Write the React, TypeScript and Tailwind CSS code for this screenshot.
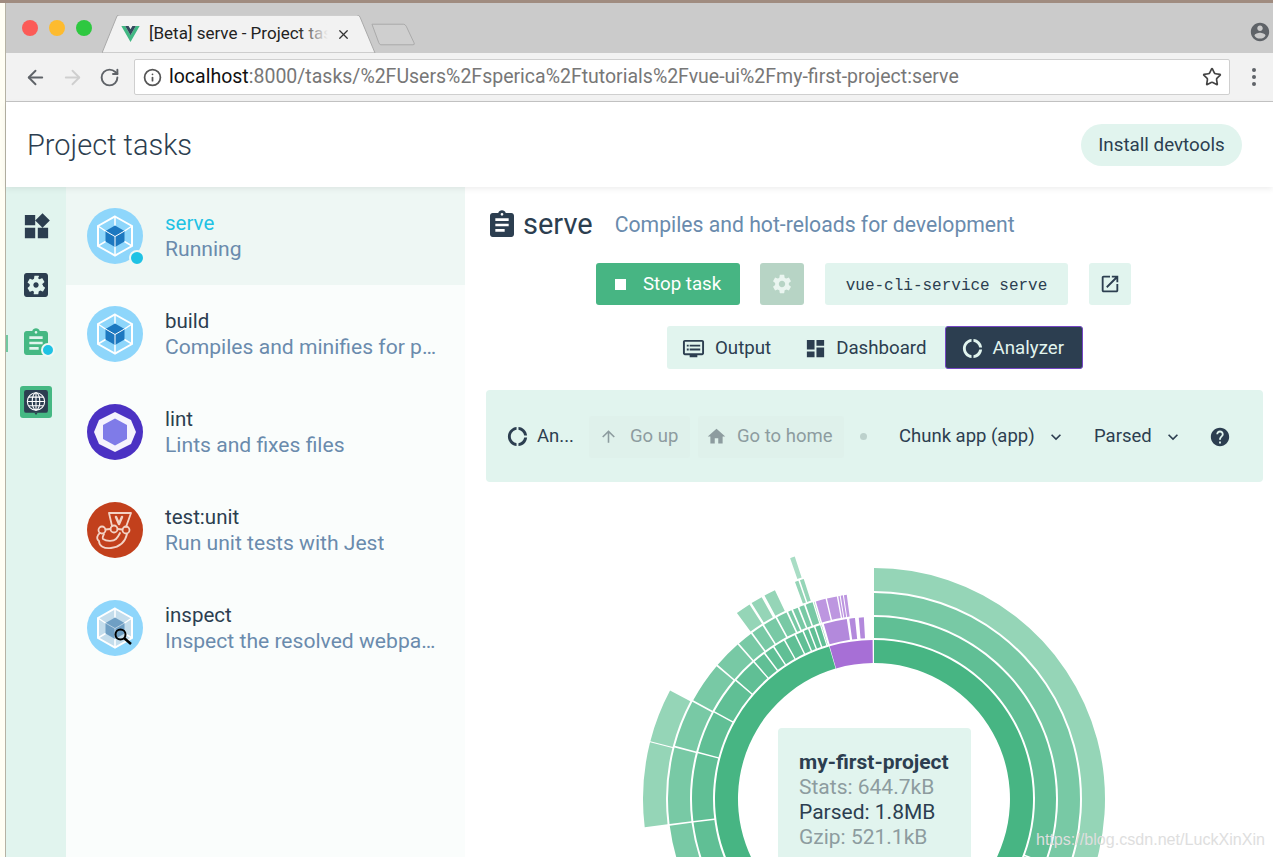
import { ArrowLeft, ArrowRight, Info, RotateCw, Star, X } from "lucide-react";
import type { ReactNode } from "react";

const paths = {
  widgets: "M13 13v8h8v-8h-8zM3 21h8v-8H3v8zM3 3v8h8V3H3zm13.66-1.31L11 7.34 16.66 13l5.66-5.66-5.66-5.65z",
  settingsBox:
    "M12 10c-1.1 0-2 .9-2 2s.9 2 2 2 2-.9 2-2-.9-2-2-2zm7-7H5c-1.11 0-2 .9-2 2v14c0 1.1.89 2 2 2h14c1.11 0 2-.9 2-2V5c0-1.1-.89-2-2-2zm-1.75 9c0 .23-.02.46-.05.68l1.48 1.16c.13.11.17.3.08.45l-1.4 2.42c-.09.15-.27.21-.43.15l-1.74-.7c-.36.28-.76.51-1.18.69l-.26 1.85c-.03.17-.18.3-.35.3h-2.8c-.17 0-.32-.13-.35-.3L10.5 17c-.42-.18-.82-.41-1.18-.69l-1.74.7c-.16.06-.34 0-.43-.15l-1.4-2.42c-.09-.15-.05-.34.08-.45l1.48-1.16c-.03-.22-.05-.45-.05-.68 0-.23.02-.46.05-.68l-1.48-1.16c-.13-.11-.17-.3-.08-.45l1.4-2.42c.09-.15.27-.21.43-.15l1.74.7c.36-.28.76-.51 1.18-.69l.26-1.85c.03-.17.18-.3.35-.3h2.8c.17 0 .32.13.35.3L13.5 7c.42.18.82.41 1.18.69l1.74-.7c.16-.06.34 0 .43.15l1.4 2.42c.09.15.05.34-.08.45l-1.48 1.16c.03.22.05.45.05.68z",
  assignment:
    "M19 3h-4.18C14.4 1.84 13.3 1 12 1c-1.3 0-2.4.84-2.82 2H5c-1.1 0-2 .9-2 2v14c0 1.1.9 2 2 2h14c1.1 0 2-.9 2-2V5c0-1.1-.9-2-2-2zm-7 0c.55 0 1 .45 1 1s-.45 1-1 1-1-.45-1-1 .45-1 1-1zm2 14H7v-2h7v2zm3-4H7v-2h10v2zm0-4H7V7h10v2z",
  gear: "M19.43 12.98c.04-.32.07-.64.07-.98s-.03-.66-.07-.98l2.11-1.65c.19-.15.24-.42.12-.64l-2-3.46c-.12-.22-.39-.3-.61-.22l-2.49 1c-.52-.4-1.08-.73-1.69-.98l-.38-2.65C14.46 2.18 14.25 2 14 2h-4c-.25 0-.46.18-.49.42l-.38 2.65c-.61.25-1.17.59-1.69.98l-2.49-1c-.23-.09-.49 0-.61.22l-2 3.46c-.13.22-.07.49.12.64l2.11 1.65c-.04.32-.07.65-.07.98s.03.66.07.98l-2.11 1.65c-.19.15-.24.42-.12.64l2 3.46c.12.22.39.3.61.22l2.49-1c.52.4 1.08.73 1.69.98l.38 2.65c.03.24.24.42.49.42h4c.25 0 .46-.18.49-.42l.38-2.65c.61-.25 1.17-.59 1.69-.98l2.49 1c.23.09.49 0 .61-.22l2-3.46c.12-.22.07-.49-.12-.64l-2.11-1.65zM12 15.5c-1.93 0-3.5-1.57-3.5-3.5s1.57-3.5 3.5-3.5 3.5 1.57 3.5 3.5-1.57 3.5-3.5 3.5z",
  dashboard: "M3 13h8V3H3v10zm0 8h8v-6H3v6zm10 0h8V11h-8v10zm0-18v6h8V3h-8z",
  output:
    "M21 3H3c-1.1 0-2 .9-2 2v12c0 1.1.9 2 2 2h5v2h8v-2h5c1.1 0 1.99-.9 1.99-2L23 5c0-1.1-.9-2-2-2zm0 14H3V5h18v12zm-2-9H8v2h11V8zm0 4H8v2h11v-2zM7 8H5v2h2V8zm0 4H5v2h2v-2z",
  home: "M10 20v-6h4v6h5v-8h3L12 3 2 12h3v8z",
  up: "M4 12l1.41 1.41L11 7.83V20h2V7.83l5.58 5.59L20 12l-8-8-8 8z",
  help: "M12 2C6.48 2 2 6.48 2 12s4.48 10 10 10 10-4.48 10-10S17.52 2 12 2zm1 17h-2v-2h2v2zm2.07-7.75l-.9.92C13.45 12.9 13 13.5 13 15h-2v-.5c0-1.1.45-2.1 1.17-2.83l1.24-1.26c.37-.36.59-.86.59-1.41 0-1.1-.9-2-2-2s-2 .9-2 2H8c0-2.21 1.79-4 4-4s4 1.79 4 4c0 .88-.36 1.68-.93 2.25z",
  open: "M19 19H5V5h7V3H5c-1.11 0-2 .9-2 2v14c0 1.1.89 2 2 2h14c1.1 0 2-.9 2-2v-7h-2v7zM14 3v2h3.59l-9.83 9.83 1.41 1.41L19 6.41V10h2V3h-7z",
  chevron: "M7.41 8.59L12 13.17l4.59-4.58L18 10l-6 6-6-6 1.41-1.41z",
  donut:
    "M11 5.08V2c-5 .5-9 4.81-9 10s4 9.5 9 10v-3.08c-3-.48-6-3.19-6-6.92s3-6.44 6-6.92zM18.97 11H22c-.47-5-4-8.53-9-9v3.08C16 5.51 18.54 8 18.97 11zM13 18.92V22c5-.47 8.53-4 9-9h-3.03c-.43 3-2.97 5.49-5.97 5.92z",
  account:
    "M12 2C6.48 2 2 6.48 2 12s4.48 10 10 10 10-4.48 10-10S17.52 2 12 2zm0 3c1.66 0 3 1.34 3 3s-1.34 3-3 3-3-1.34-3-3 1.34-3 3-3zm0 14.2c-2.5 0-4.71-1.28-6-3.22.03-1.99 4-3.08 6-3.08 1.99 0 5.97 1.09 6 3.08-1.29 1.94-3.5 3.22-6 3.22z",
};

function Icon({ d, className }: { d: string; className?: string }) {
  return (
    <svg viewBox="0 0 24 24" fill="currentColor" className={className} aria-hidden>
      <path d={d} />
    </svg>
  );
}

function VueLogo() {
  return (
    <svg viewBox="0 0 24 21" className="h-[16px] w-[19px]" aria-hidden>
      <path d="M0 0h5l7 12L19 0h5L12 21z" fill="#41b883" />
      <path d="M5 0h4.500L12 4.300 14.500 0H19l-7 12z" fill="#35495e" />
    </svg>
  );
}

function BrowserChrome() {
  return (
    <>
      <div className="flex h-[50px] items-end bg-[#cbcbcb]">
        <div className="ml-[16px] mb-[17px] flex gap-[11px]">
          <span className="size-[16px] rounded-full bg-[#fc5b57]" />
          <span className="size-[16px] rounded-full bg-[#fdbb2f]" />
          <span className="size-[16px] rounded-full bg-[#2ec840]" />
        </div>
        <div className="relative ml-[10px] flex h-[38px] w-[275px] items-center pl-[19px]">
          <svg viewBox="0 0 275 38" className="absolute inset-0 h-full w-full" aria-hidden>
            <path d="M0 38 L15 1 Q15.500 0 18 0 L255 0 Q257 0 258 2 L273 38 Z" fill="#f2f2f2" stroke="#a9a9a9" />
          </svg>
          <div className="relative">
            <VueLogo />
          </div>
          <div className="relative ml-[9px] w-[179px] overflow-hidden whitespace-nowrap text-[17px] text-[#222]">
            [Beta] serve - Project tasks
            <span className="absolute inset-y-0 right-0 w-[30px] bg-gradient-to-r from-transparent to-[#f2f2f2]" />
          </div>
          <X className="relative ml-[8px] size-[15px] text-[#333]" strokeWidth={2} />
        </div>
        <svg viewBox="0 0 46 23" className="mb-[7px] -ml-[6px] h-[23px] w-[45px]" aria-hidden>
          <path d="M1 1 L33 1 Q35 1 36 3 L44 20 Q45 22 43 22 L10 22 Q9 22 8 20 Z" fill="#cfcfcf" stroke="#a9a9a9" />
        </svg>
        <Icon d={paths.account} className="mb-[10px] ml-auto mr-[2px] size-[22px] text-[#5f6368]" />
      </div>
      <div className="flex h-[49px] items-center border-b border-[#c4c4c4] bg-[#f2f2f2]">
        <ArrowLeft className="ml-[18px] size-[23px] text-[#5f6368]" strokeWidth={2} />
        <ArrowRight className="ml-[14px] size-[23px] text-[#cfcfcf]" strokeWidth={2} />
        <RotateCw className="ml-[15px] size-[21px] text-[#5f6368]" strokeWidth={2.2} />
        <div className="ml-[14px] flex h-[36px] w-[1096px] items-center rounded-[2px] border border-[#cfcfcf] bg-white pl-[8px] text-[19.5px]">
          <Info className="size-[19px] text-[#555]" strokeWidth={2.2} />
          <span className="ml-[7px] whitespace-nowrap text-[#111]">
            localhost
            <span className="text-[#777]">:8000/tasks/%2FUsers%2Fsperica%2Ftutorials%2Fvue-ui%2Fmy-first-project:serve</span>
          </span>
          <Star className="ml-auto mr-[7px] size-[20px] text-[#444]" strokeWidth={2} />
        </div>
        <svg viewBox="0 0 6 20" className="ml-[21px] h-[20px] w-[6px]" aria-hidden>
          <circle cx="3" cy="3" r="2" fill="#5f6368" />
          <circle cx="3" cy="10" r="2" fill="#5f6368" />
          <circle cx="3" cy="17" r="2" fill="#5f6368" />
        </svg>
      </div>
    </>
  );
}

function Webpack({ faded }: { faded?: boolean }) {
  return (
    <svg viewBox="0 0 56 56" className="size-[56px]" aria-hidden>
      <circle cx="28" cy="28" r="28" fill="#8ed6fb" />
      <path d="M28 8.500 45 18v20l-17 9.500L11 38V18z" fill={faded ? "#c4ddec" : "none"} stroke="#fff" strokeWidth="2" />
      <path d="M28 17.500 37.500 23v10.500L28 39l-9.500-5.500V23z" fill={faded ? "#6f9fc4" : "#1c78c0"} />
      <path d="M18.500 23 28 28.500 37.500 23M28 28.500V39" fill="none" stroke="#fff" strokeWidth="1" opacity={faded ? 0.5 : 1} />
      <path
        d="M11 18l7.500 5M45 18l-7.500 5M11 38l7.500-4.500M45 38l-7.500-4.500M28 8.500v9M28 39v8.500"
        stroke="#fff"
        strokeWidth="1.500"
      />
      {faded && (
        <g fill="none" stroke="#000" strokeWidth="2">
          <circle cx="33.500" cy="34.500" r="5" />
          <path d="M37 38l7 6" strokeWidth="2.500" />
        </g>
      )}
    </svg>
  );
}

function Eslint() {
  return (
    <svg viewBox="0 0 56 56" className="size-[56px]" aria-hidden>
      <circle cx="28" cy="28" r="28" fill="#4b32c3" />
      <path d="M28 8 44 16 49 28 44 40 28 48 12 40 7 28 12 16z" fill="#f5f3fd" />
      <path d="M28 14.500 40 21v14l-12 6.500L16 35V21z" fill="#7f7be8" />
    </svg>
  );
}

function Jest() {
  return (
    <svg viewBox="0 0 56 56" className="size-[56px]" aria-hidden>
      <circle cx="28" cy="28" r="28" fill="#c2401c" />
      <g fill="none" stroke="#f3d3c6" strokeWidth="1.800" strokeLinejoin="round" strokeLinecap="round">
        <path d="M22 11h22l-5 14M22 11l3 13" />
        <path d="M29 15l3 7 3-7" strokeWidth="2.500" />
        <circle cx="15" cy="28" r="3.500" />
        <circle cx="27" cy="27" r="3.500" />
        <circle cx="39" cy="28" r="3.500" />
        <path d="M13 31C10 33 9 37 12 39c0 5 5 8 12 7 8-1 14-5 16-14" />
        <path d="M17 32c-1 2-2 4-1 5 3 2 10 3 13 0 2-2 3-4 4-6" />
        <path d="M18.500 27.500 23.500 27M30.500 27l5 .5" />
      </g>
    </svg>
  );
}

function StatusDot({ className }: { className: string }) {
  return <span className={`absolute rounded-full border-[2px] border-[#eff8f5] bg-[#1fc2e4] ${className}`} />;
}

function Sidebar() {
  return (
    <div className="flex w-[60px] shrink-0 flex-col items-center bg-[#e1f4ee] pt-[24px]">
      <Icon d={paths.widgets} className="size-[31px] text-[#2c3e50]" />
      <Icon d={paths.settingsBox} className="mt-[27px] size-[32px] text-[#2c3e50]" />
      <div className="relative mt-[26px]">
        <span className="absolute -left-[14px] top-[8px] h-[17px] w-[2px] bg-[#72c8a0]" />
        <Icon d={paths.assignment} className="size-[32px] text-[#45b883]" />
        <StatusDot className="-right-[3px] top-[16px] size-[14px]" />
      </div>
      <div className="mt-[27px] flex size-[32px] items-center justify-center rounded-[3px] bg-[#45b883]">
        <svg viewBox="0 0 24 24" className="size-[26px]" aria-hidden>
          <rect x="1" y="1" width="22" height="21" rx="2" fill="#2c3e50" />
          <path d="M10.500 22h3L12 24z" fill="#2c3e50" />
          <g fill="none" stroke="#fff" strokeWidth="1">
            <circle cx="12" cy="11.500" r="8" />
            <ellipse cx="12" cy="11.500" rx="3.500" ry="8" />
            <path d="M4 11.500h16M5 7.500h14M5 15.500h14M12 3.500v16" />
          </g>
        </svg>
      </div>
    </div>
  );
}

const tasks: { name: string; desc: string; icon: ReactNode; active?: boolean }[] = [
  { name: "serve", desc: "Running", icon: <Webpack />, active: true },
  { name: "build", desc: "Compiles and minifies for production", icon: <Webpack /> },
  { name: "lint", desc: "Lints and fixes files", icon: <Eslint /> },
  { name: "test:unit", desc: "Run unit tests with Jest", icon: <Jest /> },
  { name: "inspect", desc: "Inspect the resolved webpack config", icon: <Webpack faded /> },
];

function TaskList() {
  return (
    <div className="w-[399px] shrink-0 bg-[#fafdfc]">
      {tasks.map((task) => (
        <div
          key={task.name}
          className={`flex h-[98px] items-center pl-[21px] pr-[25px] ${task.active ? "bg-[#eef7f4]" : ""}`}
        >
          <div className="relative shrink-0">
            {task.icon}
            {task.active && <StatusDot className="right-[-2px] bottom-[-2px] size-[16px]" />}
          </div>
          <div className="ml-[22px] min-w-0 pb-[1px] leading-[26px]">
            <div className={`text-[20.5px] ${task.active ? "text-[#1fc2e4]" : "text-[#2c3e50]"}`}>{task.name}</div>
            <div className="truncate text-[21.1px] text-[#6a8bad]">{task.desc}</div>
          </div>
        </div>
      ))}
    </div>
  );
}

const toRad = (deg: number) => ((deg - 90) * Math.PI) / 180;

// one ring segment, angles in degrees clockwise from the top
function arc(cx: number, cy: number, r0: number, r1: number, a0: number, a1: number) {
  const pt = (r: number, a: number) =>
    `${(cx + r * Math.cos(toRad(a))).toFixed(2)} ${(cy + r * Math.sin(toRad(a))).toFixed(2)}`;
  const large = a1 - a0 > 180 ? 1 : 0;
  return `M${pt(r1, a0)}A${r1} ${r1} 0 ${large} 1 ${pt(r1, a1)}L${pt(r0, a1)}A${r0} ${r0} 0 ${large} 0 ${pt(r0, a0)}Z`;
}

const rings = [
  { r0: 136, r1: 159, green: "#47b583", purple: "#a76fd6" },
  { r0: 161, r1: 182, green: "#60bf95", purple: "#b389dc" },
  { r0: 184, r1: 206, green: "#78c9a5", purple: "#bd96e0" },
  { r0: 208, r1: 231, green: "#95d5b7", purple: "#c9a8e6" },
  { r0: 233, r1: 255, green: "#a9ddc5", purple: "#c9a8e6" },
];

const segments: { ring: number; a: number; b: number; purple?: boolean }[] = [
  { ring: 0, a: 0, b: 343.6 },
  { ring: 0, a: -16.2, b: -0.5, purple: true },
  { ring: 1, a: -16, b: -8.6, purple: true },
  { ring: 1, a: -7.8, b: -6, purple: true },
  { ring: 1, a: -4.8, b: -3.2, purple: true },
  { ring: 2, a: -16.4, b: -13.6, purple: true },
  { ring: 2, a: -13.2, b: -10.4, purple: true },
  { ring: 2, a: -10, b: -9.6, purple: true },
  { ring: 2, a: -9.3, b: -8.7, purple: true },
  { ring: 2, a: -8.4, b: -7.6, purple: true },
  { ring: 1, a: 0, b: 110.3 },
  { ring: 1, a: 110.8, b: 170 },
  { ring: 2, a: 0, b: 150 },
  { ring: 3, a: 0, b: 150 },
  ...[-130, -97.2, -75.2, -61.4, -49.3, -41.2, -36.9, -33.4, -29.4, -25.6, -22.9, -21, -19, -17].map((a, i, all) => ({
    ring: 1,
    a: a + 0.25,
    b: (all[i + 1] ?? -16.6) - 0.25,
  })),
  ...[-130, -97.2, -75.3, -61.6, -49.6, -41.2, -36.4, -32.5, -28.3, -24.9, -23.4, -21.5, -19.6, -17.1].map((a, i, all) => ({
    ring: 2,
    a: a + 0.25,
    b: (all[i + 1] ?? -16.7) - 0.25,
  })),
  { ring: 3, a: -97, b: -75.8 },
  { ring: 3, a: -75.5, b: -62 },
  { ring: 3, a: -36.4, b: -32.6 },
  { ring: 3, a: -32, b: -29.1 },
  { ring: 3, a: -28.3, b: -25.4 },
  { ring: 3, a: -20, b: -19.1 },
  { ring: 3, a: -18.7, b: -17.7 },
  { ring: 4, a: -19.2, b: -18.1 },
];

function Sunburst() {
  return (
    <svg viewBox="0 0 808 375" className="h-[375px] w-[808px]" aria-hidden>
      {segments.map((s, i) => {
        const ring = rings[s.ring];
        return <path key={i} d={arc(409, 317, ring.r0, ring.r1, s.a, s.b)} fill={s.purple ? ring.purple : ring.green} />;
      })}
    </svg>
  );
}

function MainPane() {
  return (
    <div className="relative flex-1 bg-white">
      <div className="flex h-[76px] items-center pb-[1px] pl-[21px]">
        <Icon d={paths.assignment} className="size-[32px] text-[#2c3e50]" />
        <span className="ml-[5px] text-[29px] text-[#2c3e50]">serve</span>
        <span className="ml-[22px] text-[21.2px] text-[#6a8bad]">Compiles and hot-reloads for development</span>
      </div>

      <div className="flex h-[42px]">
        <div className="ml-[131px] flex w-[144px] items-center rounded-[3px] bg-[#47b583] pl-[19px] text-[18.7px] text-white">
          <span className="size-[11px] bg-white" />
          <span className="ml-[17px]">Stop task</span>
        </div>
        <div className="ml-[20px] flex w-[44px] items-center justify-center rounded-[3px] bg-[#b7d4c5]">
          <Icon d={paths.gear} className="size-[22px] text-[#eaf5f0]" />
        </div>
        <div className="ml-[21px] flex w-[243px] items-center justify-center rounded-[3px] bg-[#e1f4ee] pt-[3px] font-[family-name:'Liberation_Mono',monospace] text-[16px] text-[#2c3e50]">
          vue-cli-service serve
        </div>
        <div className="ml-[21px] flex w-[42px] items-center justify-center rounded-[3px] bg-[#e1f4ee]">
          <Icon d={paths.open} className="size-[22px] text-[#2c3e50]" />
        </div>
      </div>

      <div className="mt-[21px] flex h-[43px]">
        <div className="ml-[202px] flex rounded-[3px] bg-[#e1f4ee] text-[18.7px] text-[#2c3e50]">
          <div className="flex items-center pl-[15px] pt-[2px]">
            <Icon d={paths.output} className="size-[23px]" />
            <span className="ml-[10px]">Output</span>
          </div>
          <div className="flex items-center pl-[33px] pr-[18px] pt-[2px]">
            <Icon d={paths.dashboard} className="size-[23px]" />
            <span className="ml-[9px]">Dashboard</span>
          </div>
          <div className="flex w-[138px] items-center rounded-[3px] border-[1.5px] border-[#7446c4] bg-[#2c3e50] pl-[15px] pt-[2px] text-[#e1f4ee]">
            <Icon d={paths.donut} className="size-[23px]" />
            <span className="ml-[9px]">Analyzer</span>
          </div>
        </div>
      </div>

      <div className="ml-[21px] mt-[21px] flex h-[92px] w-[777px] items-center rounded-[4px] bg-[#e1f4ee] pt-[1px] text-[18.5px]">
        <Icon d={paths.donut} className="ml-[20px] size-[23px] text-[#2c3e50]" />
        <span className="ml-[8px] w-[40px] whitespace-nowrap text-[#2c3e50]">An...</span>
        <div className="ml-[12px] flex h-[42px] w-[101px] items-center whitespace-nowrap rounded-[2px] bg-[#dff1eb] pl-[10px] text-[#8d9c9f]">
          <Icon d={paths.up} className="size-[19px] shrink-0" />
          <span className="ml-[12px]">Go up</span>
        </div>
        <div className="ml-[8px] flex h-[42px] w-[146px] items-center whitespace-nowrap rounded-[2px] bg-[#dff1eb] pl-[8px] text-[#8d9c9f]">
          <Icon d={paths.home} className="size-[21px] shrink-0" />
          <span className="ml-[10px]">Go to home</span>
        </div>
        <span className="ml-[16px] size-[7px] rounded-full bg-[#bcd1cc]" />
        <span className="ml-[32px] w-[135px] whitespace-nowrap text-[#2c3e50]">Chunk app (app)</span>
        <Icon d={paths.chevron} className="ml-[12px] size-[20px] text-[#2c3e50]" />
        <span className="ml-[28px] w-[57px] text-[#2c3e50]">Parsed</span>
        <Icon d={paths.chevron} className="ml-[12px] size-[20px] text-[#2c3e50]" />
        <Icon d={paths.help} className="ml-[26px] size-[22px] text-[#2c3e50]" />
      </div>

      <div className="relative h-[375px]">
        <Sunburst />
        <div className="absolute left-[313px] top-[246px] h-[140px] w-[193px] rounded-[4px] bg-[#e1f4ee] pl-[21px] pt-[22px] text-[21px] leading-[25px]">
          <div className="font-bold text-[#2c3e50]">my-first-project</div>
          <div className="text-[#8d9c9f]">Stats: 644.7kB</div>
          <div className="text-[#2c3e50]">Parsed: 1.8MB</div>
          <div className="text-[#8d9c9f]">Gzip: 521.1kB</div>
        </div>
      </div>
    </div>
  );
}

export default function App() {
  return (
    <div className="relative flex h-[857px] w-[1273px] flex-col overflow-hidden bg-[#fffef4] font-[family-name:Roboto,sans-serif]">
      <div className="h-[3px] shrink-0 bg-[#a08c80]" />
      <div className="ml-[5px] flex min-h-0 flex-1 flex-col border-l border-[#b5b2a4] bg-white">
        <BrowserChrome />
        <div className="relative z-10 flex h-[85px] shrink-0 items-center justify-between bg-white pl-[21px] pr-[31px] shadow-[0_2px_6px_rgba(0,0,0,0.07)]">
          <h1 className="pt-[2px] text-[29px] font-light text-[#2c3e50]">Project tasks</h1>
          <div className="flex h-[42px] w-[161px] items-center justify-center rounded-full bg-[#e1f4ee] pt-[2px] text-[18.8px] text-[#2c3e50]">
            Install devtools
          </div>
        </div>
        <div className="flex min-h-0 flex-1">
          <Sidebar />
          <TaskList />
          <MainPane />
        </div>
      </div>
      <span className="absolute bottom-[6px] right-[8px] font-[family-name:'Liberation_Sans',sans-serif] text-[16.1px] text-[#dedede]">
        https://blog.csdn.net/LuckXinXin
      </span>
    </div>
  );
}
